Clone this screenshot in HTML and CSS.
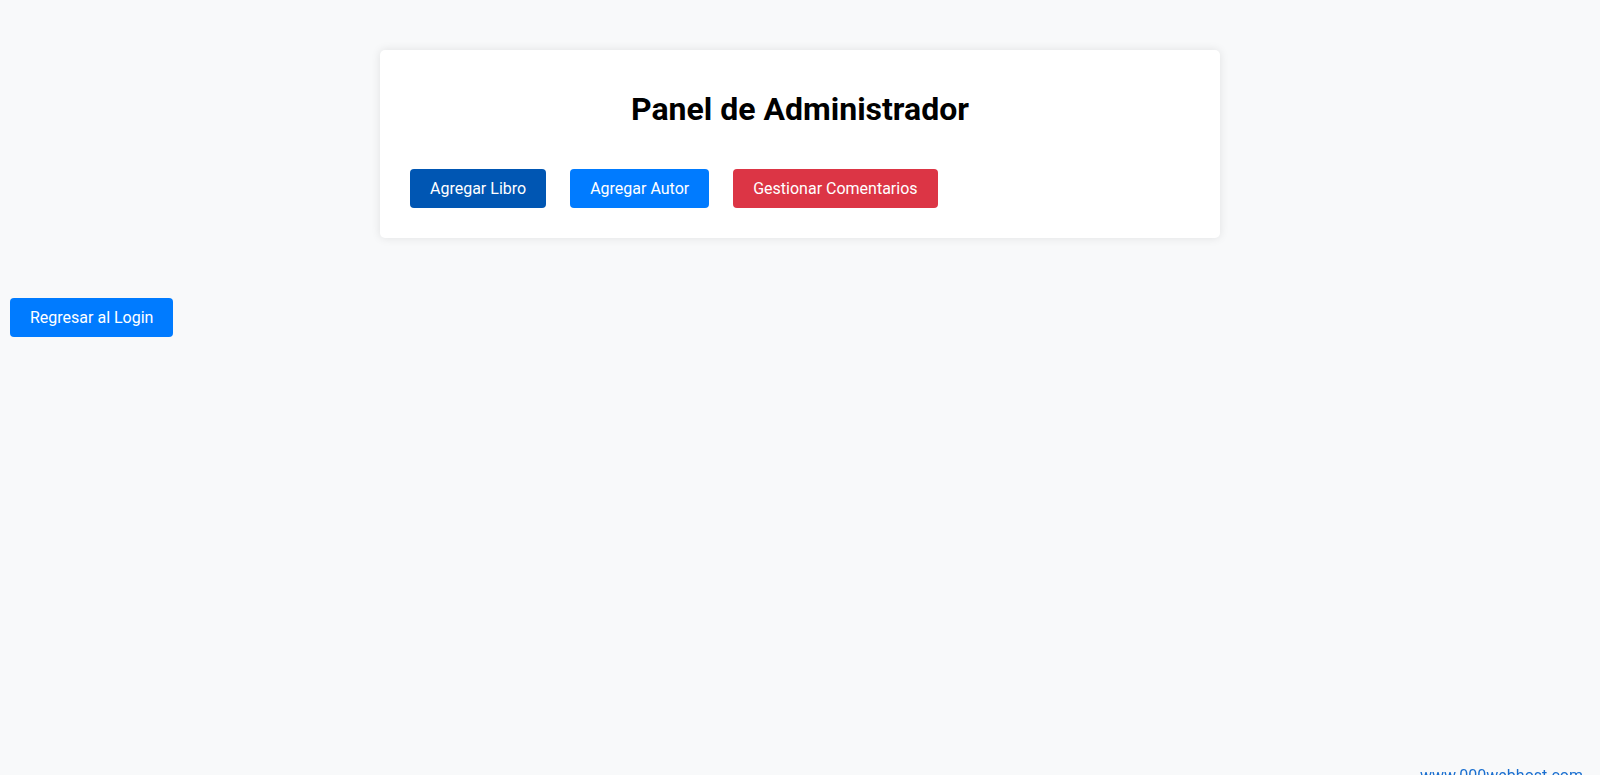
FILE: index.html
```html
<!DOCTYPE html>
<html lang="es">
<head>
<meta charset="utf-8">
<title>Panel de Administrador</title>
<link rel="stylesheet" href="styles.css">
</head>
<body>
<div class="container">
  <h1 class="title">Panel de Administrador</h1>
  <div class="actions">
    <a class="btn btn-dark" href="#">Agregar Libro</a>
    <a class="btn btn-primary" href="#">Agregar Autor</a>
    <a class="btn btn-danger" href="#">Gestionar Comentarios</a>
  </div>
</div>
<div class="back">
  <a class="btn btn-primary" href="#">Regresar al Login</a>
</div>
<a class="host-badge" href="#">www.000webhost.com</a>
</body>
</html>
```

FILE: styles.css
```css
html, body {
  margin: 0;
  padding: 0;
}
body {
  background: #f8f9fa;
  font-family: Roboto, "Liberation Sans", Arial, sans-serif;
  color: #000;
  min-height: 775px;
}
.container {
  width: 800px;
  margin: 50px auto;
  padding: 20px;
  background: #fff;
  border-radius: 5px;
  box-shadow: 0 0 10px rgba(0, 0, 0, 0.1);
}
.title {
  margin: 21px 0 0;
  text-align: center;
  font-size: 32px;
  font-weight: 700;
  line-height: 37px;
}
.actions {
  display: flex;
  gap: 24px;
  padding: 41px 10px 10px;
}
.btn {
  display: inline-block;
  padding: 10px 20px;
  font-size: 16px;
  line-height: 19px;
  color: #fff;
  text-decoration: none;
  border-radius: 4px;
}
.btn-dark { background: #0056b3; }
.btn-primary { background: #007bff; }
.btn-danger { background: #dc3545; }
.back {
  display: flex;
  padding: 10px;
}
.host-badge {
  position: fixed;
  right: 17px;
  bottom: -10px;
  font-size: 16px;
  line-height: 19px;
  color: #1a6fd0;
  text-decoration: none;
}
```
